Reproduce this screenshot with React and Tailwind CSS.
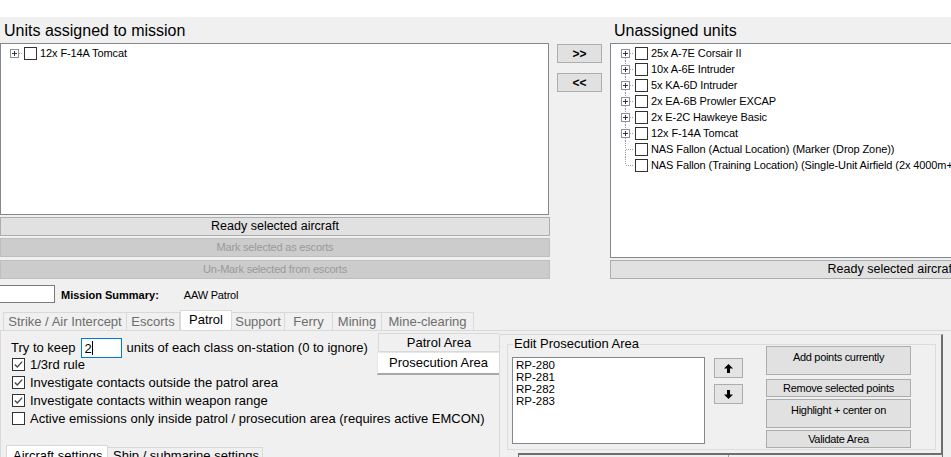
import React from "react";

function TreeRow({ hasChildren = true, first, last, lines = true, text }) {
  return (
    <div className="flex items-center h-[16px]">
      <svg width="16" height="16" className="shrink-0">
        {lines && !first && (
          <line x1="8.5" y1="0" x2="8.5" y2="8" stroke="#a0a0a0" strokeDasharray="1 1" />
        )}
        {lines && !last && (
          <line x1="8.5" y1="9" x2="8.5" y2="16" stroke="#a0a0a0" strokeDasharray="1 1" />
        )}
        <line x1="9" y1="8.5" x2="16" y2="8.5" stroke="#a0a0a0" strokeDasharray="1 1" />
        {hasChildren && (
          <>
            <rect x="4.5" y="4.5" width="8" height="8" fill="#fff" stroke="#919191" />
            <path d="M6 8.5h5M8.5 6v5" stroke="#2a3550" />
          </>
        )}
      </svg>
      <div className="ml-[2px] w-[13px] h-[13px] border border-[#333] bg-white shrink-0" />
      <span className="ml-[3px] text-[11px] leading-[13px] tracking-[-0.1px] whitespace-nowrap">{text}</span>
    </div>
  );
}

function Check({ checked, label }) {
  return (
    <div className="flex items-center h-[18px] pl-[11px]">
      <div className="w-[13px] h-[13px] border border-[#333] bg-white shrink-0 flex items-center justify-center">
        {checked && (
          <svg width="11" height="11" viewBox="0 0 11 11">
            <path d="M1.8 5.6 L4.3 8 L9.2 2.6" fill="none" stroke="#4a4a4a" strokeWidth="1.4" />
          </svg>
        )}
      </div>
      <span className="ml-[5px] text-[13px] leading-[15px] whitespace-nowrap">{label}</span>
    </div>
  );
}

function Arrow({ down }) {
  return (
    <svg width="9" height="9" viewBox="0 0 9 9" className={down ? "rotate-180" : ""}>
      <path d="M4.5 0 L9 4.5 H6 V9 H3 V4.5 H0 Z" fill="#000" />
    </svg>
  );
}

const rightUnits = [
  { t: "25x A-7E Corsair II", c: true },
  { t: "10x A-6E Intruder", c: true },
  { t: "5x KA-6D Intruder", c: true },
  { t: "2x EA-6B Prowler EXCAP", c: true },
  { t: "2x E-2C Hawkeye Basic", c: true },
  { t: "12x F-14A Tomcat", c: true },
  { t: "NAS Fallon (Actual Location) (Marker (Drop Zone))", c: false },
  { t: "NAS Fallon (Training Location) (Single-Unit Airfield (2x 4000m+ Runways))", c: false },
];

const tabs = [
  { t: "Strike / Air Intercept", w: "w-[124px]" },
  { t: "Escorts", w: "w-[53px]" },
  { t: "Patrol", w: "w-[52px]", sel: true },
  { t: "Support", w: "w-[53px]" },
  { t: "Ferry", w: "w-[48px]" },
  { t: "Mining", w: "w-[49px]" },
  { t: "Mine-clearing", w: "w-[92px]" },
];

export default function App() {
  return (
    <div className="w-[951px] h-[457px] overflow-hidden bg-[#f0f0f0] text-black font-['Liberation_Sans',Arial,sans-serif]">
      <div className="h-[17px] bg-white" />

      {/* top lists */}
      <div className="flex h-[262px]">
        <div className="w-[550px] shrink-0">
          <div className="h-[26px] pl-[4px] pt-[1px] text-[16px] leading-[26px] whitespace-nowrap">
            Units assigned to mission
          </div>
          <div className="w-[549px] h-[172px] border border-[#828790] bg-white pt-[1px] pl-[5px]">
            <TreeRow first last text="12x F-14A Tomcat" />
          </div>
          <div className="mt-[2px] h-[19px] border border-[#adadad] bg-[#e1e1e1] flex items-center justify-center text-[12.5px]">
            Ready selected aircraft
          </div>
          <div className="mt-[2px] h-[19px] border border-[#bfbfbf] bg-[#cccccc] flex items-center justify-center text-[11px] text-[#9a9a9a] tracking-[-0.2px]">
            Mark selected as escorts
          </div>
          <div className="mt-[3px] h-[19px] border border-[#bfbfbf] bg-[#cccccc] flex items-center justify-center text-[11px] text-[#9a9a9a] tracking-[-0.2px]">
            Un-Mark selected from escorts
          </div>
        </div>

        <div className="w-[60px] shrink-0 pt-[27px] pl-[7px]">
          <div className="w-[45px] h-[19px] border border-[#adadad] bg-[#e1e1e1] flex items-center justify-center text-[12px] font-bold">
            &gt;&gt;
          </div>
          <div className="mt-[10px] w-[45px] h-[19px] border border-[#adadad] bg-[#e1e1e1] flex items-center justify-center text-[12px] font-bold">
            &lt;&lt;
          </div>
        </div>

        <div className="flex-1 min-w-0">
          <div className="h-[26px] pl-[4px] pt-[1px] text-[16px] leading-[26px] whitespace-nowrap">Unassigned units</div>
          <div className="w-[400px] h-[215px] border border-[#828790] bg-white pt-[1px] pl-[6px]">
            {rightUnits.map((u, i) => (
              <TreeRow
                key={i}
                first={i === 0}
                last={i === rightUnits.length - 1}
                hasChildren={u.c}
                text={u.t}
              />
            ))}
          </div>
          <div className="mt-[2px] w-[549px] h-[19px] border border-[#adadad] bg-[#e1e1e1] flex items-center justify-center pl-[14px] text-[12.5px] whitespace-nowrap">
            Ready selected aircraft
          </div>
        </div>
      </div>

      {/* mission summary row */}
      <div className="h-[31px] flex items-start">
        <div className="mt-[6px] w-[55px] h-[18px] border border-[#7a7a7a] border-l-0 bg-white" />
        <div className="mt-[10px] ml-[6px] text-[11px] font-bold leading-[13px] whitespace-nowrap">
          Mission Summary:
        </div>
        <div className="mt-[10px] ml-[25px] text-[11px] leading-[13px] tracking-[-0.2px] whitespace-nowrap">
          AAW Patrol
        </div>
      </div>

      {/* tab strip */}
      <div className="h-[20px] flex items-end pl-[3px]">
        {tabs.map((t) =>
          t.sel ? (
            <div
              key={t.t}
              className={`${t.w} h-[20px] border border-b-0 border-[#d9d9d9] bg-white flex items-center justify-center text-[13px] pb-[1px] text-black`}
            >
              {t.t}
            </div>
          ) : (
            <div
              key={t.t}
              className={`${t.w} h-[18px] border border-b-0 border-l-0 first:border-l border-[#d9d9d9] bg-[#f0f0f0] flex items-center justify-center text-[13px] text-[#6d6d6d] whitespace-nowrap`}
            >
              {t.t}
            </div>
          )
        )}
      </div>

      {/* tab panel */}
      <div className="h-[127px] border-t border-l border-[#d9d9d9] flex">
        {/* left settings */}
        <div className="w-[376px] shrink-0">
          <div className="mt-[7px] h-[20px] flex items-center pl-[10px] text-[13px] whitespace-nowrap">
            <span>Try to keep</span>
            <div className="ml-[5px] w-[41px] h-[20px] border border-[#0078d7] bg-white flex items-center pl-[3px]">
              <span className="leading-[15px]">2</span>
              <span className="inline-block w-px h-[14px] bg-black" />
            </div>
            <span className="ml-[5px]">units of each class on-station (0 to ignore)</span>
          </div>
          <div className="-mt-[3px]">
            <Check checked label="1/3rd rule" />
            <Check checked label="Investigate contacts outside the patrol area" />
            <Check checked label="Investigate contacts within weapon range" />
            <Check label="Active emissions only inside patrol / prosecution area (requires active EMCON)" />
          </div>
          <div className="mt-[18px] flex items-start pl-[5px] text-[13px] whitespace-nowrap">
            <div className="w-[102px] h-[14px] border border-b-0 border-[#d9d9d9] bg-white pl-[6px] pt-[2px] leading-[15px]">
              Aircraft settings
            </div>
            <div className="mt-[2px] w-[155px] h-[12px] border border-b-0 border-l-0 border-[#d9d9d9] bg-[#f0f0f0] pl-[5px] leading-[15px]">
              Ship / submarine settings
            </div>
          </div>
        </div>

        {/* vertical tabs */}
        <div className="w-[122px] shrink-0 pt-[2px] text-[13px]">
          <div className="ml-[1px] h-[19px] border border-[#d9d9d9] border-r-0 bg-[#f0f0f0] flex items-center justify-center">
            Patrol Area
          </div>
          <div className="h-[23px] border-l border-t border-[#e6e6e6] border-b-2 border-b-[#a9a9a9] bg-white flex items-center justify-center">
            Prosecution Area
          </div>
        </div>

        {/* right area */}
        <div className="w-[444px] shrink-0 mt-[3px] border-t border-l border-[#d9d9d9] border-r-2 border-r-[#6e6e6e]">
          <div className="relative ml-[7px] mt-[9px] w-[429px] h-[106px] border border-[#dcdcdc]">
            <span className="absolute -top-[9px] left-[5px] px-[1px] bg-[#f0f0f0] text-[13px] leading-[15px] whitespace-nowrap">
              Edit Prosecution Area
            </span>
            <div className="flex items-start">
              <div className="ml-[4px] mt-[12px] w-[193px] h-[87px] border border-[#828790] bg-white pl-[3px] pt-[1px] text-[11.5px] leading-[12px]">
                <div>RP-280</div>
                <div>RP-281</div>
                <div>RP-282</div>
                <div>RP-283</div>
              </div>
              <div className="ml-[9px] mt-[13px] w-[29px]">
                <div className="h-[20px] border border-[#adadad] bg-[#e4e4e4] flex items-center justify-center">
                  <Arrow />
                </div>
                <div className="mt-[6px] h-[20px] border border-[#adadad] bg-[#e4e4e4] flex items-center justify-center">
                  <Arrow down />
                </div>
              </div>
              <div className="ml-[23px] mt-[1px] w-[145px] text-[11px] tracking-[-0.3px] whitespace-nowrap">
                <div className="h-[29px] border border-[#adadad] bg-[#e1e1e1] text-center pt-[4px] leading-[13px]">
                  Add points currently
                </div>
                <div className="mt-[4px] h-[18px] border border-[#adadad] bg-[#e1e1e1] flex items-center justify-center">
                  Remove selected points
                </div>
                <div className="mt-[2px] h-[29px] border border-[#adadad] bg-[#e1e1e1] text-center pt-[4px] leading-[13px]">
                  Highlight + center on
                </div>
                <div className="mt-[2px] h-[18px] border border-[#adadad] bg-[#e1e1e1] flex items-center justify-center">
                  Validate Area
                </div>
              </div>
            </div>
          </div>
          <div className="ml-[18px] mt-[3px] w-[424px] h-[10px] border-t-2 border-l border-[#6e6e6e] bg-[#f0f0f0] flex text-[12px] leading-[14px] overflow-hidden whitespace-nowrap">
            <div className="w-[210px] pl-[10px] border-r border-[#a0a0a0]">Name of Reference Point</div>
            <div className="pl-[10px]">Latitude / Longitude</div>
          </div>
        </div>
      </div>
    </div>
  );
}
